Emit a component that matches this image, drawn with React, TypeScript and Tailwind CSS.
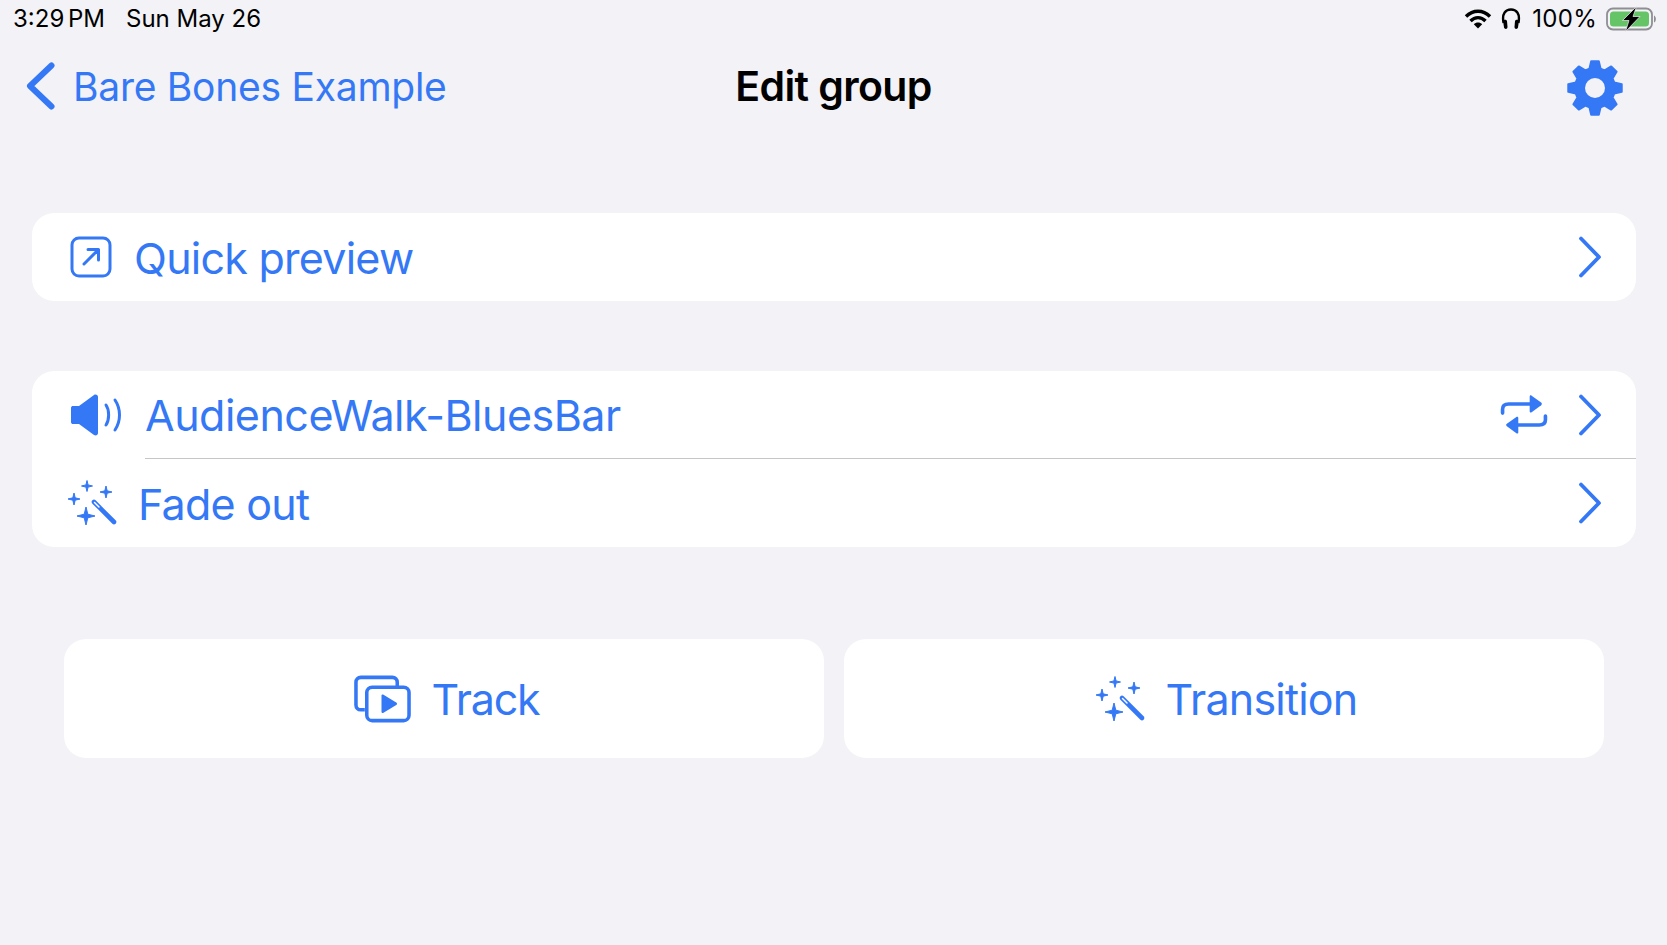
const gearPath = (() => {
  const cx = 30, cy = 30, teeth = 8, outer = 27, inner = 20;
  const pts: string[] = [];
  for (let i = 0; i < teeth; i++) {
    const a = (i / teeth) * Math.PI * 2 - Math.PI / 2;
    const step = (Math.PI * 2) / teeth;
    const list: [number, number][] = [
      [inner, a - step * 0.36],
      [outer, a - step * 0.18],
      [outer, a + step * 0.18],
      [inner, a + step * 0.36],
    ];
    for (const [r, t] of list) pts.push(`${(cx + r * Math.cos(t)).toFixed(2)} ${(cy + r * Math.sin(t)).toFixed(2)}`);
  }
  return "M" + pts.join("L") + "Z";
})();

function Chevron() {
  return (
    <svg width="24" height="42" viewBox="0 0 24 42" fill="none" stroke="currentColor" strokeWidth="3.8" strokeLinecap="round" strokeLinejoin="round" className="shrink-0">
      <path d="M3 2.5 L21 21 L3 39.5" />
    </svg>
  );
}

function Sparkle({ x, y, r }: { x: number; y: number; r: number }) {
  const k = r * 0.2;
  return <path d={`M${x} ${y - r}L${x + k} ${y - k}L${x + r} ${y}L${x + k} ${y + k}L${x} ${y + r}L${x - k} ${y + k}L${x - r} ${y}L${x - k} ${y - k}Z`} fill="currentColor" stroke="currentColor" strokeWidth="1" strokeLinejoin="round" />;
}

function Wand() {
  return (
    <svg width="50" height="46" viewBox="0 0 50 46" fill="none" className="shrink-0">
      <Sparkle x={19} y={6} r={5.5} />
      <Sparkle x={38} y={12} r={6} />
      <Sparkle x={6} y={19} r={6} />
      <Sparkle x={18} y={36} r={9} />
      <path d="M26 22 L46 42" stroke="currentColor" strokeWidth="4.6" strokeLinecap="round" />
      <path d="M26.5 22.5 L31 27" stroke="white" strokeWidth="1.4" strokeLinecap="round" />
    </svg>
  );
}

function Row({ icon, label, text, trailing, inset }: { icon: React.ReactNode; label: string; text: string; trailing?: React.ReactNode; inset: string }) {
  return (
    <div className={`flex h-full items-center pr-[34px] ${inset}`}>
      {icon}
      <span className={`text-[43px] leading-none ${text}`}>{label}</span>
      <div className="ml-auto flex items-center gap-[30px]">
        {trailing}
        <Chevron />
      </div>
    </div>
  );
}

export default function App() {
  return (
    <div className="h-[945px] w-[1667px] overflow-hidden bg-[#f2f2f7] font-['Inter',sans-serif] text-[#3478f6]">
      <div className="flex h-[36px] items-center pl-[13px] pr-[9px] pt-[1px] text-[24px] text-black">
        <span className="[word-spacing:-3px]">3:29 PM</span>
        <span className="ml-[21px]">Sun May 26</span>
        <div className="ml-auto flex items-center">
          <svg width="28" height="20" viewBox="0 0 28 20" fill="none" stroke="black" strokeWidth="3.4">
            <path d="M2 7.5 C9 0.5 19 0.5 26 7.5" />
            <path d="M6.5 12 C11 7.5 17 7.5 21.5 12" />
            <path d="M14 19.5 L9.8 15.2 C12 13 16 13 18.2 15.2 Z" fill="black" stroke="none" />
          </svg>
          <svg width="20" height="22" viewBox="0 0 20 22" fill="none" className="ml-[9px]">
            <path d="M2.6 15 C0.5 5 5 1.5 10 1.5 C15 1.5 19.5 5 17.4 15" stroke="black" strokeWidth="2.4" />
            <path d="M2 12.5 C3 11.5 5.5 11.5 6 13 L6.5 19 C6.5 21.5 3.5 21.5 3 19.5 Z" fill="black" />
            <path d="M18 12.5 C17 11.5 14.5 11.5 14 13 L13.5 19 C13.5 21.5 16.5 21.5 17 19.5 Z" fill="black" />
          </svg>
          <span className="ml-[11px] tracking-[0.3px]">100%</span>
          <svg width="52" height="26" viewBox="0 0 52 26" fill="none" className="ml-[9px]">
            <rect x="1" y="2.5" width="45" height="21" rx="6" stroke="#8e8e93" strokeWidth="1.8" />
            <rect x="4" y="5.5" width="39" height="15" rx="3.5" fill="#65c466" />
            <path d="M48 9.5 C50.5 10.5 50.5 15.5 48 16.5 Z" fill="#8e8e93" />
            <path d="M30.5 0.5 L16.5 14.5 H23 L19.5 25.5 L34 10.5 H27 Z" fill="black" stroke="#f2f2f7" strokeWidth="0.7" />
          </svg>
        </div>
      </div>

      <div className="grid h-[100px] grid-cols-[1fr_auto_1fr] items-center px-[26px]">
        <div className="flex items-center gap-[18px]">
          <svg width="29" height="48" viewBox="0 0 29 48" fill="none" stroke="currentColor" strokeWidth="6" strokeLinecap="round" strokeLinejoin="round">
            <path d="M25.5 3.5 L4 24 L25.5 44.5" />
          </svg>
          <span className="text-[39px] leading-none tracking-[-0.26px]">Bare Bones Example</span>
        </div>
        <span className="text-[41px] font-semibold leading-none tracking-[-0.6px] text-black">Edit group</span>
        <div className="mr-[16px] mt-[4px] flex justify-end">
          <svg width="60" height="60" viewBox="0 0 60 60">
            <path fillRule="evenodd" d={`${gearPath} M30 20.5 A9.5 9.5 0 1 0 30 39.5 A9.5 9.5 0 1 0 30 20.5 Z`} fill="currentColor" stroke="currentColor" strokeWidth="2" strokeLinejoin="round" />
            <circle cx="30" cy="30" r="10" fill="#f2f2f7" />
          </svg>
        </div>
      </div>

      <div className="flex flex-col pl-[32px] pr-[31px] pt-[77px]">
        <div className="h-[88px] rounded-[22px] bg-white">
          <Row
            inset="pl-[38px]"
            text="ml-[22px] mt-[2px] tracking-[-0.75px]"
            label="Quick preview"
            icon={
              <svg width="42" height="42" viewBox="0 0 42 42" fill="none" stroke="currentColor" strokeWidth="3" strokeLinecap="round" strokeLinejoin="round" className="shrink-0">
                <rect x="2" y="2" width="38" height="38" rx="7" />
                <path d="M14 28 L28 14 M18 13.5 H28.5 V24" />
              </svg>
            }
          />
        </div>

        <div className="mt-[70px] flex h-[176px] flex-col rounded-[22px] bg-white">
          <div className="h-[87px]">
            <Row
              inset="pl-[38px]"
              text="ml-[23px] mt-[1px] tracking-[-0.5px]"
              label="AudienceWalk-BluesBar"
              icon={
                <svg width="52" height="42" viewBox="0 0 52 42" fill="none" className="shrink-0">
                  <path d="M1 14 C1 12.5 2 12 3 12 H9 L24 1 C26 0 28 1 28 3 V39 C28 41 26 42 24 41 L9 30 H3 C2 30 1 29.5 1 28 Z" fill="currentColor" />
                  <path d="M36 11 C39.5 16 39.5 26 36 31" stroke="currentColor" strokeWidth="3" strokeLinecap="round" />
                  <path d="M45 6 C51 15 51 27 45 36" stroke="currentColor" strokeWidth="3" strokeLinecap="round" />
                </svg>
              }
              trailing={
                <svg width="48" height="40" viewBox="0 0 50 42" fill="none" className="shrink-0">
                  <path d="M2.5 19 V15 C2.5 11 5 9.5 9 9.5 H32" stroke="currentColor" strokeWidth="3.8" strokeLinecap="round" />
                  <path d="M31 1.5 C31 0.5 32 0 33 0.7 L43 8 C44 8.8 44 10 43 10.8 L33 18 C32 18.7 31 18.3 31 17 Z" fill="currentColor" />
                  <path d="M47.5 22 V26 C47.5 30 45 31.5 41 31.5 H18" stroke="currentColor" strokeWidth="3.8" strokeLinecap="round" />
                  <path d="M19 24 C19 23 18 22.5 17 23.2 L7 30.3 C6 31 6 32 7 32.8 L17 40.2 C18 40.9 19 40.5 19 39.5 Z" fill="currentColor" />
                </svg>
              }
            />
          </div>
          <div className="ml-[113px] h-px bg-[#c6c6c8]" />
          <div className="h-[88px]">
            <Row inset="pl-[36px]" text="ml-[20px] mt-[3px] tracking-[-0.75px]" label="Fade out" icon={<Wand />} />
          </div>
        </div>

        <div className="mt-[92px] grid grid-cols-2 gap-[20px] px-[32px]">
          <button className="flex h-[119px] items-center justify-center gap-[21px] rounded-[22px] bg-white pl-[5px]">
            <svg width="57" height="48" viewBox="0 0 58 48" fill="none" stroke="currentColor" strokeWidth="3.6" className="shrink-0">
              <path d="M11 35 H7 C4 35 2 33 2 30 V7 C2 4 4 2 7 2 H39 C42 2 44 4 44 7 V11" />
              <rect x="13" y="12" width="43" height="34" rx="5.5" />
              <path d="M28 20.5 C28 19.5 29 19 30 19.6 L43 27.5 C44 28.2 44 29.3 43 30 L30 38 C29 38.6 28 38 28 37 Z" fill="currentColor" stroke="none" />
            </svg>
            <span className="mt-[2px] text-[43px] leading-none tracking-[-1.2px]">Track</span>
          </button>
          <button className="flex h-[119px] items-center justify-center gap-[20px] rounded-[22px] bg-white pl-[5px]">
            <Wand />
            <span className="mt-[2px] text-[43px] leading-none tracking-[-0.8px]">Transition</span>
          </button>
        </div>
      </div>
    </div>
  );
}
